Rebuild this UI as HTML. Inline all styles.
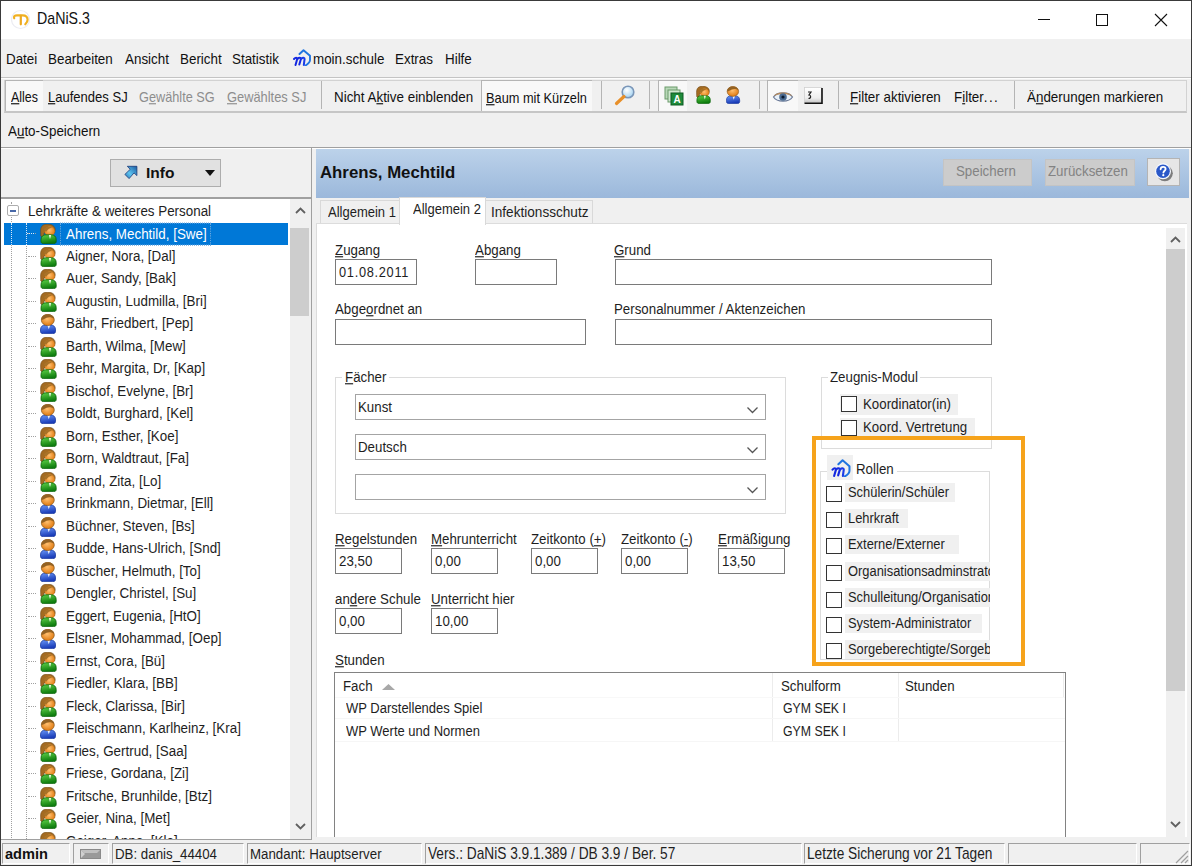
<!DOCTYPE html>
<html><head><meta charset="utf-8">
<style>
*{box-sizing:border-box;margin:0;padding:0}
html,body{width:1192px;height:866px;overflow:hidden}
body{position:relative;background:#f0f0f0;font-family:"Liberation Sans",sans-serif;font-size:13.3px;color:#1e1e1e}
.a{position:absolute;white-space:nowrap}
.u{text-decoration:underline;text-underline-offset:1px}
/* frame */
#bl{left:0;top:0;width:1px;height:866px;background:#3a3a3a}
#br{left:1191px;top:0;width:1px;height:866px;background:#3a3a3a}
#bt{left:0;top:0;width:1192px;height:1px;background:#3a3a3a}
#bb{left:0;top:865px;width:1192px;height:1px;background:#3a3a3a}
#title{left:1px;top:1px;width:1190px;height:38px;background:#fff}
/* menu */
.mn{font-size:13.4px;top:52px;color:#111}
/* toolbar */
.tb{top:90px;font-size:13.4px;color:#111}
.dis{color:#8d8d8d}
.sep{position:absolute;width:1px;background:#b4b4b4;top:81px;height:28px}
.prs{position:absolute;background:#f8f8f8;border-top:1px solid #b4b4b4;border-left:1px solid #b4b4b4}
/* tree */
.ti{position:absolute;left:3px;width:284px;height:22px}
.ti span{position:absolute;left:62px;top:3px;font-size:13.4px;color:#1e1e1e}
.ti.sel{background:#0078d7}
.ti.sel span{color:#fff;outline:1px dotted #6aa8e0;outline-offset:0px;padding:0 3px 0 1px;left:57px;top:2.5px;height:18px;line-height:18px;padding-left:5px}
.ti .ic{position:absolute;left:36px;top:1px}
.ti .st{position:absolute;left:24px;top:10px;width:8px;border-top:1px dotted #a0a0a0}
.lbl{font-size:13.3px;color:#1e1e1e}
.inp{position:absolute;background:#fff;border:1px solid #7a7a7a;height:26px}
.inp span{position:absolute;left:3px;top:5px;font-size:13.3px;color:#1e1e1e}
.cmb{position:absolute;background:#fff;border:1px solid #a4a4a4;height:26px;left:355px;width:411px}
.cmb span{position:absolute;left:2px;top:5px;font-size:13.3px;color:#1e1e1e}
.cmb svg{position:absolute;left:391px;top:12px}
.grp{position:absolute;border:1px solid #dcdcdc}
.cb{position:absolute;left:826px;width:16px;height:16px;border:1px solid #333;background:#fff}
.cbl{position:absolute;left:845px;height:19px;background:#f0f0f0;font-size:13.3px;padding-left:3px;line-height:19px;overflow:hidden;color:#1e1e1e}
.sp{position:absolute;top:843px;height:21px;border-top:1px solid #a0a0a0;border-left:1px solid #a0a0a0;border-right:1px solid #fff;border-bottom:1px solid #fff}
.sp span{position:absolute;left:2px;top:3px;font-size:13.3px;color:#1e1e1e}
.sy{transform:scaleY(1.16);transform-origin:0 79%}
.sy2{transform:scaleY(1.15);transform-origin:0 79%}
.sy3{transform:scaleY(1.09);transform-origin:0 79%}
.mn,.tb{transform:scaleY(1.15);transform-origin:0 79%}
.lbl,.ti span,.inp span,.cmb span,.sp span,.cbl b{transform:scaleY(1.16);transform-origin:0 79%}
.cbl b{display:inline-block;font-weight:normal}
.cbl.r b{transform:scale(0.97,1.16)}
</style></head><body>
<svg width="0" height="0" style="position:absolute">
<defs>
<radialGradient id="gface" cx="0.45" cy="0.4" r="0.6"><stop offset="0" stop-color="#ffc070"/><stop offset="1" stop-color="#e07a10"/></radialGradient>
<linearGradient id="ggr" x1="0" y1="0" x2="0.3" y2="1"><stop offset="0" stop-color="#5ed048"/><stop offset="1" stop-color="#0e7c0e"/></linearGradient>
<linearGradient id="gbl" x1="0" y1="0" x2="0.3" y2="1"><stop offset="0" stop-color="#6a98f8"/><stop offset="1" stop-color="#1a3cb8"/></linearGradient>
<symbol id="fem" viewBox="0 0 17 20">
<path d="M0.6 7 C0.6 2 3 0.2 7.5 0.2 C12 0.2 15.2 2 15.2 6 L14.6 9 L4 9 L3.6 13.8 L0.8 12 Z" fill="#a36b22" stroke="#6e4714" stroke-width="0.6"/>
<circle cx="9.8" cy="7.4" r="4.9" fill="url(#gface)"/>
<path d="M3.8 5.5 C5.5 2.5 9.5 2 12.5 3.5 C10 3.8 7.5 5.2 6 8 Z" fill="#a87228"/>
<path d="M1 15.8 C1 12.3 3 10.8 6 10.8 L11.2 10.8 C14.2 10.8 16.2 12.3 16.2 15.8 L16.2 17.3 C16.2 19 15.2 19.6 13.5 19.6 L3.7 19.6 C2 19.6 1 19 1 17.3 Z" fill="url(#ggr)" stroke="#0b650b" stroke-width="0.8"/>
<path d="M8.8 10.9 L10 15 L11.2 10.9 Z" fill="#eef6e8"/>
</symbol>
<symbol id="mal" viewBox="0 0 17 20">
<path d="M0.5 16 C0.5 12.5 2.5 11 5.5 11 L10.5 11 C13.5 11 15.5 12.5 15.5 16 L15.5 17.3 C15.5 19 14.5 19.6 12.8 19.6 L3.2 19.6 C1.5 19.6 0.5 19 0.5 17.3 Z" fill="url(#gbl)" stroke="#1a3aa0" stroke-width="0.8"/>
<path d="M7.3 11.1 L8.8 15.3 L10.2 11.1 Z" fill="#eef2fa"/>
<ellipse cx="7.8" cy="6" rx="6.5" ry="5.6" fill="url(#gface)" stroke="#8a5a20" stroke-width="0.7"/>
<path d="M1.3 6 C1.3 2 4 0.3 7.8 0.3 C11.2 0.3 13.8 2 14.2 4.8 C12 3 9 2.7 6.5 3.7 C4.5 4.6 3 6 1.3 6 Z" fill="#946222"/>
</symbol>
<symbol id="moin" viewBox="0 0 18 17">
<path d="M6.5 5 L10.5 1.2 L17 6.8 L17 11 C17 13 15 15 12.5 16.5" fill="none" stroke="#1f74e0" stroke-width="1.9" stroke-linejoin="round" stroke-linecap="round"/>
<path d="M1 10 C2.5 8.3 4 8.5 4.3 9.8 L2.5 16" fill="none" stroke="#1428e0" stroke-width="2" stroke-linecap="round"/>
<path d="M4.6 9.8 C6 8.3 7.8 8.5 8 9.8 L6.3 15.5" fill="none" stroke="#1428e0" stroke-width="2" stroke-linecap="round"/>
<path d="M8.3 9.8 C9.8 8.3 11.6 8.5 11.6 10 L10.8 16" fill="none" stroke="#1a3ce8" stroke-width="2" stroke-linecap="round"/>
</symbol>
</defs></svg>
<!-- title bar -->
<div class="a" id="title"></div>
<svg class="a" style="left:11px;top:9px" width="20" height="21" viewBox="0 0 20 21">
<circle cx="9.5" cy="10.5" r="9" fill="#fff" stroke="#ececf2" stroke-width="1.2"/>
<path d="M3.2 9.3 C2.6 7.3 3.6 6.3 6 6.3 L11.5 6.3 C15 6.3 16.6 8.5 16.6 10.8 C16.6 12.6 15.6 14 14.3 15.3" fill="none" stroke="#f0b020" stroke-width="2.2" stroke-linecap="round"/>
<path d="M9.8 6.8 L9.8 15.3" stroke="#eda820" stroke-width="2.2" stroke-linecap="round"/>
</svg>
<div class="a sy2" style="left:37px;top:11px;font-size:14.2px;color:#111">DaNiS.3</div>
<div class="a" style="left:1038px;top:19px;width:12px;height:1px;background:#111"></div>
<div class="a" style="left:1096px;top:14px;width:12px;height:12px;border:1px solid #111"></div>
<svg class="a" style="left:1154px;top:13px" width="14" height="14" viewBox="0 0 14 14"><path d="M1 1 L13 13 M13 1 L1 13" stroke="#111" stroke-width="1.1"/></svg>

<!-- menu -->
<div class="a mn" style="left:6px">Datei</div>
<div class="a mn" style="left:48px">Bearbeiten</div>
<div class="a mn" style="left:125px">Ansicht</div>
<div class="a mn" style="left:180px">Bericht</div>
<div class="a mn" style="left:232px">Statistik</div>
<svg class="a" style="left:293px;top:49px" width="18" height="17"><use href="#moin"/></svg>
<div class="a mn" style="left:313px">moin.schule</div>
<div class="a mn" style="left:395px">Extras</div>
<div class="a mn" style="left:445px">Hilfe</div>
<div class="a" style="left:1px;top:77px;width:1190px;height:1px;background:#c4c4c4"></div>
<div class="a" style="left:1px;top:78px;width:1190px;height:1px;background:#fdfdfd"></div>

<!-- toolbar 1 -->
<div class="a" style="left:4px;top:80px;width:1183px;height:33px;border:1px solid #d2d2d2;border-bottom:2px solid #c6c6c6;background:#f0f0f0"></div>
<div class="prs" style="left:5px;top:80px;width:38px;height:31px"></div>
<div class="a tb" style="left:11px;transform:scale(0.93,1.15)"><span class="u">A</span>lles</div>
<div class="a tb" style="left:48px;transform:scale(0.973,1.15)"><span class="u">L</span>aufendes SJ</div>
<div class="a tb dis" style="left:139px;transform:scale(0.95,1.15)">G<span class="u">e</span>wählte SG</div>
<div class="a tb dis" style="left:227px;transform:scale(0.96,1.15)"><span class="u">G</span>ewähltes SJ</div>
<div class="sep" style="left:321px"></div>
<div class="a tb" style="left:334px">Nicht A<span class="u">k</span>tive einblenden</div>
<div class="prs" style="left:481px;top:80px;width:111px;height:31px"></div>
<div class="a tb" style="left:486px;top:91px;transform:scale(0.955,1.15)"><span class="u">B</span>aum mit Kürzeln</div>
<div class="sep" style="left:601px"></div>
<svg class="a" style="left:612px;top:83px" width="24" height="24" viewBox="0 0 24 24">
<defs><radialGradient id="glens" cx="0.4" cy="0.35" r="0.7"><stop offset="0" stop-color="#ffffff"/><stop offset="1" stop-color="#9fd0f0"/></radialGradient></defs>
<circle cx="16" cy="9" r="5.8" fill="url(#glens)" stroke="#7a96b8" stroke-width="1.6"/>
<path d="M12 13.5 L4.5 20.5" stroke="#e8902a" stroke-width="3.2" stroke-linecap="round"/>
</svg>
<div class="sep" style="left:649px"></div>
<div class="prs" style="left:658px;top:80px;width:29px;height:31px"></div>
<svg class="a" style="left:664px;top:86px" width="20" height="20" viewBox="0 0 20 20">
<rect x="1" y="1" width="12" height="12" fill="#b8d8b8" stroke="#6a9a6a"/>
<rect x="4" y="4" width="12" height="12" fill="#d0e8d0" stroke="#6a9a6a"/>
<rect x="7" y="7" width="12" height="12" fill="#1e8a3a" stroke="#0d5a20"/>
<text x="9.5" y="17" font-family="Liberation Sans" font-weight="bold" font-size="10" fill="#fff">A</text>
</svg>
<svg class="a" style="left:696px;top:86px" width="15" height="18"><use href="#fem"/></svg>
<svg class="a" style="left:726px;top:86px" width="15" height="18"><use href="#mal"/></svg>
<div class="sep" style="left:759px"></div>
<div class="prs" style="left:767px;top:80px;width:31px;height:31px"></div>
<svg class="a" style="left:772px;top:89px" width="22" height="15" viewBox="0 0 22 15">
<path d="M1.5 8 C5 2.5 17 2.5 20.5 8 C17 13.5 5 13.5 1.5 8 Z" fill="#e8f0f8" stroke="#6a7a98" stroke-width="1.2"/>
<path d="M1.5 7.5 C4 2 18 2 20.5 7.5 C17 4 5 4 1.5 7.5 Z" fill="#b88a5a"/>
<circle cx="11" cy="8" r="3.8" fill="#4a6a90"/><circle cx="11" cy="8" r="1.6" fill="#0a1a30"/>
</svg>
<svg class="a" style="left:804px;top:87px" width="19" height="17" viewBox="0 0 19 17">
<defs><linearGradient id="gk" x1="0" y1="0" x2="0" y2="1"><stop offset="0" stop-color="#ffffff"/><stop offset="0.7" stop-color="#eeeeee"/><stop offset="1" stop-color="#c8c8c8"/></linearGradient></defs>
<rect x="0.5" y="0.5" width="17" height="15" fill="url(#gk)" stroke="#d0d0d0" stroke-width="0.8"/>
<path d="M18 1 L18 16.2 L0.5 16.2" fill="none" stroke="#111" stroke-width="1.6"/>
<path d="M4 5 L7 5 L5 8 C7 8 7.5 11.5 4.5 11.5" fill="none" stroke="#222" stroke-width="1.2"/>
</svg>
<div class="sep" style="left:838px"></div>
<div class="a tb" style="left:850px"><span class="u">F</span>ilter aktivieren</div>
<div class="a tb" style="left:954px">F<span class="u">i</span>lter<span style="letter-spacing:1.4px">...</span></div>
<div class="sep" style="left:1014px"></div>
<div class="a tb" style="left:1027px">Ä<span class="u">n</span>derungen markieren</div>

<!-- toolbar 2 -->
<div class="a sy2" style="left:8px;top:124px;font-size:13.4px;color:#111">A<span class="u">u</span>to-Speichern</div>
<div class="a" style="left:1px;top:147px;width:1190px;height:1px;background:#a0a0a0"></div>
<div class="a" style="left:1px;top:148px;width:1190px;height:1px;background:#fff"></div>
<!-- left panel -->
<div class="a" style="left:110px;top:159px;width:111px;height:28px;background:#e1e1e1;border:1px solid #adadad"></div>
<svg class="a" style="left:123px;top:165px" width="15" height="15" viewBox="0 0 15 15">
<defs><linearGradient id="gar" x1="0" y1="1" x2="1" y2="0"><stop offset="0" stop-color="#2a6aa8"/><stop offset="0.4" stop-color="#5cc4f0"/><stop offset="1" stop-color="#1a5aa0"/></linearGradient></defs>
<path d="M4.3 1.3 L13.9 1.3 L13.9 10.6 L11 7.9 L6.1 13.6 L1.9 9.4 L7.2 4.3 Z" fill="url(#gar)" stroke="#1a3a78" stroke-width="0.8" stroke-linejoin="round"/>
</svg>
<div class="a" style="left:146px;top:164px;font-size:15.5px;font-weight:bold;color:#111">Info</div>
<svg class="a" style="left:205px;top:170px" width="11" height="7"><path d="M0 0 L10 0 L5 6 Z" fill="#111"/></svg>
<div class="a" style="left:1px;top:197px;width:311px;height:2px;background:#a0a0a0"></div>
<div class="a" style="left:311px;top:148px;width:1px;height:692px;background:#a0a0a0"></div>
<div class="a" id="tree" style="left:1px;top:199px;width:310px;height:640px;background:#fff;overflow:hidden">
<div class="a" style="left:10px;top:3px;width:1px;height:700px;border-left:1px dotted #a0a0a0"></div>
<div class="a" style="left:25px;top:24px;width:1px;height:700px;border-left:1px dotted #a0a0a0"></div>
<div class="a" style="left:6px;top:6px;width:12px;height:11px;border:1px solid #adadad;border-radius:2px;background:#fff"></div>
<div class="a" style="left:9px;top:11px;width:6px;height:2px;background:#4868a8"></div>
<div class="a sy" style="left:27px;top:5px;font-size:13.4px;color:#1e1e1e">Lehrkräfte &amp; weiteres Personal</div>
<div class="ti sel" style="top:24.0px"><i class="st"></i><svg class="ic" width="17" height="20"><use href="#fem"/></svg><span>Ahrens, Mechtild, [Swe]</span></div>
<div class="ti" style="top:46.5px"><i class="st"></i><svg class="ic" width="17" height="20"><use href="#fem"/></svg><span>Aigner, Nora, [Dal]</span></div>
<div class="ti" style="top:69.0px"><i class="st"></i><svg class="ic" width="17" height="20"><use href="#fem"/></svg><span>Auer, Sandy, [Bak]</span></div>
<div class="ti" style="top:91.5px"><i class="st"></i><svg class="ic" width="17" height="20"><use href="#fem"/></svg><span>Augustin, Ludmilla, [Bri]</span></div>
<div class="ti" style="top:114.0px"><i class="st"></i><svg class="ic" width="17" height="20"><use href="#mal"/></svg><span>Bähr, Friedbert, [Pep]</span></div>
<div class="ti" style="top:136.5px"><i class="st"></i><svg class="ic" width="17" height="20"><use href="#fem"/></svg><span>Barth, Wilma, [Mew]</span></div>
<div class="ti" style="top:159.0px"><i class="st"></i><svg class="ic" width="17" height="20"><use href="#fem"/></svg><span>Behr, Margita, Dr, [Kap]</span></div>
<div class="ti" style="top:181.5px"><i class="st"></i><svg class="ic" width="17" height="20"><use href="#fem"/></svg><span>Bischof, Evelyne, [Br]</span></div>
<div class="ti" style="top:204.0px"><i class="st"></i><svg class="ic" width="17" height="20"><use href="#mal"/></svg><span>Boldt, Burghard, [Kel]</span></div>
<div class="ti" style="top:226.5px"><i class="st"></i><svg class="ic" width="17" height="20"><use href="#fem"/></svg><span>Born, Esther, [Koe]</span></div>
<div class="ti" style="top:249.0px"><i class="st"></i><svg class="ic" width="17" height="20"><use href="#fem"/></svg><span>Born, Waldtraut, [Fa]</span></div>
<div class="ti" style="top:271.5px"><i class="st"></i><svg class="ic" width="17" height="20"><use href="#fem"/></svg><span>Brand, Zita, [Lo]</span></div>
<div class="ti" style="top:294.0px"><i class="st"></i><svg class="ic" width="17" height="20"><use href="#mal"/></svg><span>Brinkmann, Dietmar, [Ell]</span></div>
<div class="ti" style="top:316.5px"><i class="st"></i><svg class="ic" width="17" height="20"><use href="#mal"/></svg><span>Büchner, Steven, [Bs]</span></div>
<div class="ti" style="top:339.0px"><i class="st"></i><svg class="ic" width="17" height="20"><use href="#mal"/></svg><span>Budde, Hans-Ulrich, [Snd]</span></div>
<div class="ti" style="top:361.5px"><i class="st"></i><svg class="ic" width="17" height="20"><use href="#mal"/></svg><span>Büscher, Helmuth, [To]</span></div>
<div class="ti" style="top:384.0px"><i class="st"></i><svg class="ic" width="17" height="20"><use href="#fem"/></svg><span>Dengler, Christel, [Su]</span></div>
<div class="ti" style="top:406.5px"><i class="st"></i><svg class="ic" width="17" height="20"><use href="#fem"/></svg><span>Eggert, Eugenia, [HtO]</span></div>
<div class="ti" style="top:429.0px"><i class="st"></i><svg class="ic" width="17" height="20"><use href="#mal"/></svg><span>Elsner, Mohammad, [Oep]</span></div>
<div class="ti" style="top:451.5px"><i class="st"></i><svg class="ic" width="17" height="20"><use href="#fem"/></svg><span>Ernst, Cora, [Bü]</span></div>
<div class="ti" style="top:474.0px"><i class="st"></i><svg class="ic" width="17" height="20"><use href="#fem"/></svg><span>Fiedler, Klara, [BB]</span></div>
<div class="ti" style="top:496.5px"><i class="st"></i><svg class="ic" width="17" height="20"><use href="#fem"/></svg><span>Fleck, Clarissa, [Bir]</span></div>
<div class="ti" style="top:519.0px"><i class="st"></i><svg class="ic" width="17" height="20"><use href="#mal"/></svg><span>Fleischmann, Karlheinz, [Kra]</span></div>
<div class="ti" style="top:541.5px"><i class="st"></i><svg class="ic" width="17" height="20"><use href="#fem"/></svg><span>Fries, Gertrud, [Saa]</span></div>
<div class="ti" style="top:564.0px"><i class="st"></i><svg class="ic" width="17" height="20"><use href="#fem"/></svg><span>Friese, Gordana, [Zi]</span></div>
<div class="ti" style="top:586.5px"><i class="st"></i><svg class="ic" width="17" height="20"><use href="#fem"/></svg><span>Fritsche, Brunhilde, [Btz]</span></div>
<div class="ti" style="top:609.0px"><i class="st"></i><svg class="ic" width="17" height="20"><use href="#fem"/></svg><span>Geier, Nina, [Met]</span></div>
<div class="ti" style="top:631.5px"><i class="st"></i><svg class="ic" width="17" height="20"><use href="#fem"/></svg><span>Geiger, Anna, [Kle]</span></div>
<div class="a" style="left:10px;top:24px;width:1px;height:22px;border-left:1px dotted #d8e8f8"></div>
<div class="a" style="left:25px;top:24px;width:1px;height:22px;border-left:1px dotted #d8e8f8"></div>
<div class="a" style="left:26px;top:34px;width:7px;border-top:1px dotted #d8e8f8"></div>
<!-- scrollbar -->
<div class="a" style="left:289px;top:0;width:21px;height:640px;background:#f0f0f0"></div>
<svg class="a" style="left:294px;top:8px" width="11" height="7"><path d="M1 6 L5.5 1.5 L10 6" fill="none" stroke="#606060" stroke-width="1.8"/></svg>
<div class="a" style="left:289px;top:29px;width:19px;height:88px;background:#cdcdcd"></div>
<svg class="a" style="left:294px;top:624px" width="11" height="7"><path d="M1 1 L5.5 5.5 L10 1" fill="none" stroke="#606060" stroke-width="1.8"/></svg>
</div>
<div class="a" style="left:1px;top:839px;width:311px;height:1px;background:#a0a0a0"></div>
<!-- right panel header -->
<div class="a" style="left:316px;top:149px;width:873px;height:49px;background:linear-gradient(#bcd2ea,#9bb8db)"></div>
<div class="a" style="left:320px;top:163px;font-size:16.8px;font-weight:bold;color:#111">Ahrens, Mechtild</div>
<div class="a" style="left:943px;top:159px;width:89px;height:27px;background:#cccccc;border:1px solid #c4c4c4"></div>
<div class="a sy3" style="left:956px;top:164px;font-size:13.3px;color:#838383">Speichern</div>
<div class="a" style="left:1045px;top:159px;width:90px;height:27px;background:#cccccc;border:1px solid #c4c4c4"></div>
<div class="a sy3" style="left:1048px;top:164px;font-size:13.3px;color:#838383">Zurücksetzen</div>
<div class="a" style="left:1147px;top:158px;width:33px;height:28px;background:#e6e6e6;border:1px solid #b4b4b4"></div>
<svg class="a" style="left:1153px;top:161px" width="22" height="22" viewBox="0 0 22 22">
<circle cx="11.8" cy="12.3" r="8" fill="#5a5a5a" opacity="0.75"/>
<circle cx="10" cy="10.3" r="8" fill="#f4f8ff"/>
<circle cx="10" cy="10.3" r="6.8" fill="#2a58c8"/>
<path d="M7.6 8.3 C7.6 6.5 8.8 5.8 10.1 5.8 C11.6 5.8 12.6 6.7 12.6 8 C12.6 9.6 10.6 9.9 10.4 11.6" fill="none" stroke="#fff" stroke-width="1.8" stroke-linecap="round"/>
<circle cx="10.3" cy="14.2" r="1.1" fill="#fff"/>
</svg>

<!-- tabs -->
<div class="a" style="left:320px;top:200px;width:80px;height:24px;background:#f0f0f0;border:1px solid #d9d9d9;border-bottom:none"></div>
<div class="a sy3" style="left:328px;top:205px;font-size:13px;color:#1e1e1e">Allgemein 1</div>
<div class="a" style="left:485px;top:200px;width:108px;height:24px;background:#f0f0f0;border:1px solid #d9d9d9;border-bottom:none"></div>
<div class="a sy3" style="left:491px;top:205px;font-size:13.6px;color:#1e1e1e">Infektionsschutz</div>
<div class="a" style="left:316px;top:223px;width:871px;height:615px;background:#fff;border:1px solid #dcdcdc;border-right:none"></div>
<div class="a" style="left:399px;top:197px;width:87px;height:28px;background:#fff;border:1px solid #d9d9d9;border-bottom:none"></div>
<div class="a sy3" style="left:413px;top:202px;font-size:13px;color:#1e1e1e">Allgemein 2</div>

<!-- content scrollbar -->
<div class="a" style="left:1166px;top:228px;width:19px;height:609px;background:#f0f0f0"></div>
<svg class="a" style="left:1170px;top:236px" width="11" height="7"><path d="M1 6 L5.5 1.5 L10 6" fill="none" stroke="#606060" stroke-width="1.8"/></svg>
<div class="a" style="left:1166px;top:249px;width:19px;height:442px;background:#cdcdcd"></div>
<svg class="a" style="left:1170px;top:821px" width="11" height="7"><path d="M1 1 L5.5 5.5 L10 1" fill="none" stroke="#606060" stroke-width="1.8"/></svg>

<!-- fields row 1 -->
<div class="a lbl" style="left:335px;top:243px"><span class="u">Z</span>ugang</div>
<div class="inp" style="left:335px;top:259px;width:82px"><span style="font-size:12.8px;letter-spacing:0.7px;top:5px">01.08.2011</span></div>
<div class="a lbl" style="left:475px;top:243px"><span class="u">A</span>bgang</div>
<div class="inp" style="left:475px;top:259px;width:82px"></div>
<div class="a lbl" style="left:614px;top:243px"><span class="u">G</span>rund</div>
<div class="inp" style="left:615px;top:259px;width:377px"></div>
<div class="a lbl" style="left:335px;top:302px">Abge<span class="u">o</span>rdnet an</div>
<div class="inp" style="left:335px;top:319px;width:251px"></div>
<div class="a lbl" style="left:614px;top:302px">Personalnummer / Aktenzeichen</div>
<div class="inp" style="left:615px;top:319px;width:377px"></div>

<!-- Faecher -->
<div class="grp" style="left:335px;top:377px;width:451px;height:137px"></div>
<div class="a lbl" style="left:342px;top:370px;background:#fff;padding:0 3px"><span class="u">F</span>ächer</div>
<div class="cmb" style="top:394px"><span>Kunst</span><svg width="11" height="7"><path d="M0.5 0.5 L5.5 5.5 L10.5 0.5" fill="none" stroke="#555" stroke-width="1.3"/></svg></div>
<div class="cmb" style="top:434px"><span>Deutsch</span><svg width="11" height="7"><path d="M0.5 0.5 L5.5 5.5 L10.5 0.5" fill="none" stroke="#555" stroke-width="1.3"/></svg></div>
<div class="cmb" style="top:474px"><span></span><svg width="11" height="7"><path d="M0.5 0.5 L5.5 5.5 L10.5 0.5" fill="none" stroke="#555" stroke-width="1.3"/></svg></div>

<!-- number fields -->
<div class="a lbl" style="left:335px;top:532px"><span class="u">R</span>egelstunden</div>
<div class="inp" style="left:335px;top:548px;width:67px"><span>23,50</span></div>
<div class="a lbl" style="left:431px;top:532px"><span class="u">M</span>ehrunterricht</div>
<div class="inp" style="left:431px;top:548px;width:67px"><span>0,00</span></div>
<div class="a lbl" style="left:531px;top:532px">Zeitkonto (<span class="u">+</span>)</div>
<div class="inp" style="left:531px;top:548px;width:67px"><span>0,00</span></div>
<div class="a lbl" style="left:621px;top:532px">Zeitkonto (<span class="u">-</span>)</div>
<div class="inp" style="left:621px;top:548px;width:67px"><span>0,00</span></div>
<div class="a lbl" style="left:718px;top:532px"><span class="u">E</span>rmäßigung</div>
<div class="inp" style="left:718px;top:548px;width:67px"><span>13,50</span></div>
<div class="a lbl" style="left:335px;top:592px">an<span class="u">d</span>ere Schule</div>
<div class="inp" style="left:335px;top:608px;width:67px"><span>0,00</span></div>
<div class="a lbl" style="left:431px;top:592px"><span class="u">U</span>nterricht hier</div>
<div class="inp" style="left:431px;top:608px;width:67px"><span>10,00</span></div>

<!-- Zeugnis-Modul -->
<div class="grp" style="left:821px;top:377px;width:171px;height:72px"></div>
<div class="a lbl" style="left:828px;top:370px;background:#fff;padding:0 2px">Zeugnis-Modul</div>
<div class="cbl" style="left:840px;top:394px;width:118px;height:21px;line-height:21px;padding-left:23px"><b>Koordinator(in)</b></div>
<div class="cb" style="left:841px;top:396px"></div>
<div class="cbl" style="left:840px;top:418px;width:135px;height:19px;line-height:19px;padding-left:23px"><b>Koord. Vertretung</b></div>
<div class="cb" style="left:841px;top:420px"></div>

<!-- Rollen -->
<div class="grp" style="left:820px;top:471px;width:170px;height:189px"></div>
<div class="a" style="left:827px;top:455px;width:26px;height:25px;background:#f0f0f0"></div>
<svg class="a" style="left:831px;top:459px" width="20" height="18"><use href="#moin"/></svg>
<div class="a lbl" style="left:853px;top:462px;background:#fff;padding:0 3px">Rollen</div>
<div class="cb" style="top:486px"></div><div class="cbl r" style="top:483px;width:110px"><b>Schülerin/Schüler</b></div>
<div class="cb" style="top:512px"></div><div class="cbl r" style="top:509px;width:63px"><b>Lehrkraft</b></div>
<div class="cb" style="top:538px"></div><div class="cbl r" style="top:535px;width:114px"><b>Externe/Externer</b></div>
<div class="cb" style="top:565px"></div><div class="cbl r" style="top:562px;width:145px"><b>Organisationsadminstrator</b></div>
<div class="cb" style="top:592px"></div><div class="cbl r" style="top:588px;width:145px"><b>Schulleitung/Organisation</b></div>
<div class="cb" style="top:617px"></div><div class="cbl r" style="top:614px;width:137px"><b>System-Administrator</b></div>
<div class="cb" style="top:643px"></div><div class="cbl r" style="top:640px;width:145px"><b>Sorgeberechtigte/Sorgeberechtigter</b></div>
<div class="a" style="left:812px;top:436px;width:213px;height:230px;border:4px solid #f6a31b"></div>

<!-- Stunden grid -->
<div class="a lbl" style="left:335px;top:653px"><span class="u">S</span>tunden</div>
<div class="a" style="left:334px;top:672px;width:732px;height:170px;border:1px solid #828282;border-bottom:none;background:#fff"></div>
<div class="a" style="left:772px;top:673px;width:1px;height:68px;background:#ececec"></div>
<div class="a" style="left:898px;top:673px;width:1px;height:68px;background:#ececec"></div>
<div class="a" style="left:335px;top:697px;width:730px;height:1px;background:#f8f8f8"></div>
<div class="a" style="left:335px;top:718px;width:730px;height:1px;background:#f6f6f6"></div>
<div class="a" style="left:1063px;top:673px;width:1px;height:24px;background:#ececec"></div>
<div class="a" style="left:335px;top:741px;width:730px;height:1px;background:#f6f6f6"></div>
<div class="a lbl" style="left:343px;top:679px">Fach</div>
<svg class="a" style="left:382px;top:684px" width="13" height="7"><path d="M0 6 L6.5 0 L13 6 Z" fill="#a8a8a8"/></svg>
<div class="a lbl" style="left:781px;top:679px">Schulform</div>
<div class="a lbl" style="left:905px;top:679px">Stunden</div>
<div class="a lbl" style="left:346px;top:701px;font-size:13px">WP Darstellendes Spiel</div>
<div class="a lbl" style="left:783px;top:701px;font-size:12.3px;top:702px">GYM SEK I</div>
<div class="a lbl" style="left:346px;top:724px;font-size:13px">WP Werte und Normen</div>
<div class="a lbl" style="left:783px;top:724px;font-size:12.3px;top:725px">GYM SEK I</div>
<div class="a" style="left:316px;top:837px;width:873px;height:6px;background:#f0f0f0"></div>

<!-- status bar -->
<div class="sp" style="left:2px;width:68px"></div>
<div class="a" style="left:5px;top:846px;font-size:14.6px;font-weight:bold;color:#111">admin</div>
<div class="sp" style="left:73px;width:36px"></div>
<svg class="a" style="left:80px;top:849px" width="22" height="10" viewBox="0 0 22 10"><rect x="0.5" y="0.5" width="20" height="9" fill="#9a9a9a" stroke="#8a8a8a"/><path d="M1 1 L5 5 L1 9 Z" fill="#d0d0d0"/><path d="M1 1 L20 1 L17 4 L4 4 Z" fill="#c0c0c0"/></svg>
<div class="sp" style="left:112px;width:132px"><span>DB: danis_44404</span></div>
<div class="sp" style="left:247px;width:175px"><span>Mandant: Hauptserver</span></div>
<div class="sp" style="left:425px;width:377px"><span style="font-size:13.7px">Vers.: DaNiS 3.9.1.389 / DB 3.9 / Ber. 57</span></div>
<div class="sp" style="left:804px;width:201px"><span style="font-size:13.7px">Letzte Sicherung vor 21 Tagen</span></div>
<div class="sp" style="left:1008px;width:129px"></div>
<div class="sp" style="left:1140px;width:50px"></div>
<svg class="a" style="left:1175px;top:850px" width="14" height="14"><path d="M13 1 L1 13 M13 6 L6 13 M13 10 L10 13" stroke="#a0a0a0" stroke-width="1.2"/></svg>

<div class="a" id="bl"></div><div class="a" id="br"></div><div class="a" id="bt"></div><div class="a" id="bb"></div>
</body></html>
